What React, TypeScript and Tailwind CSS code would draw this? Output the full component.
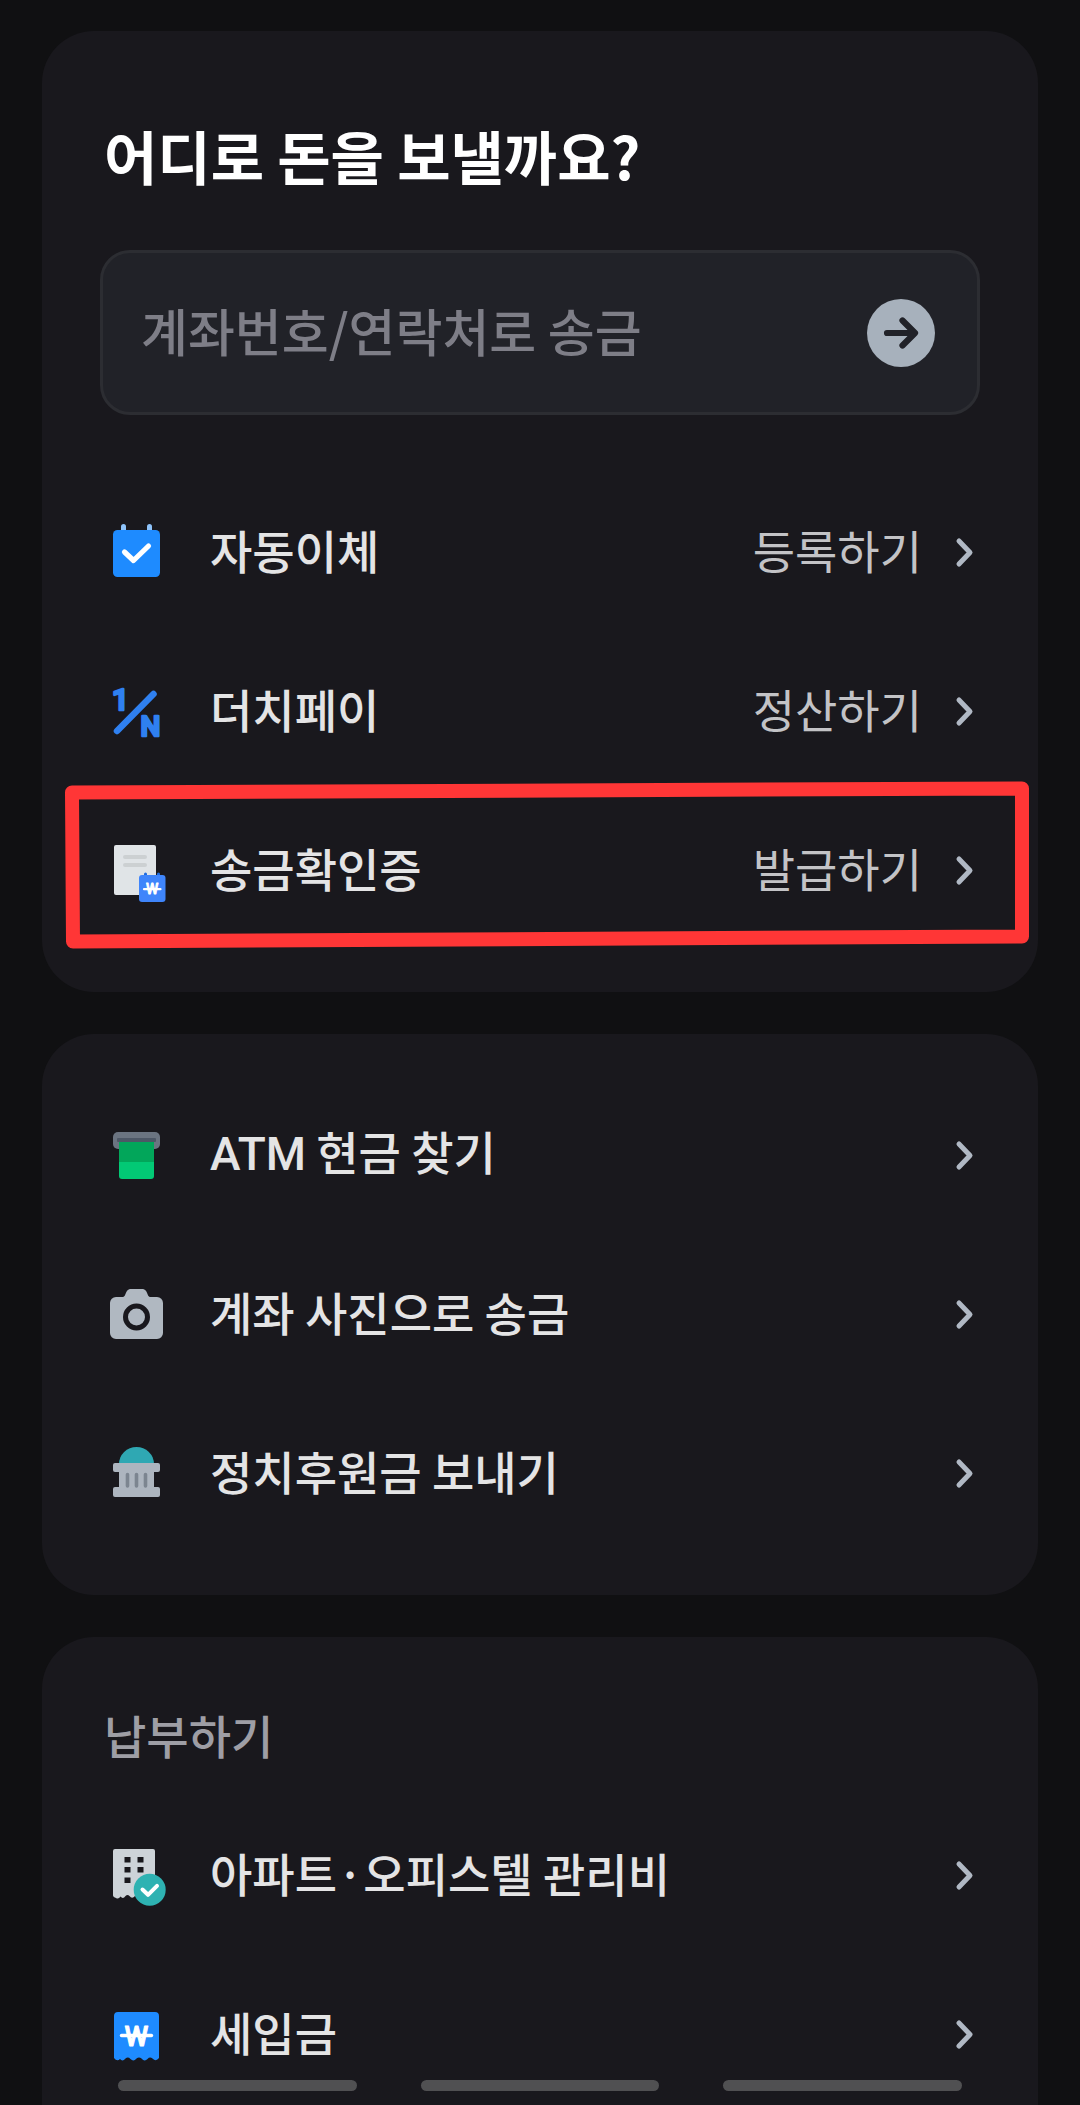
import type { ReactNode } from "react"

const iconClass = "w-[60px] h-[60px] shrink-0 overflow-visible"

function CalendarIcon() {
  return (
    <svg viewBox="0 0 60 60" className={iconClass} aria-hidden="true">
      <rect x="15" y="1" width="5" height="12" rx="2.5" fill="#8ec3fa" />
      <rect x="41" y="1" width="5" height="12" rx="2.5" fill="#8ec3fa" />
      <rect x="7" y="7" width="47" height="47" rx="4.5" fill="#1e8bff" />
      <path d="M18.5 29 27.5 37.5 42.5 23" fill="none" stroke="#fff" strokeWidth="5.2" strokeLinecap="round" strokeLinejoin="round" />
    </svg>
  )
}

function DutchPayIcon() {
  return (
    <svg viewBox="0 0 60 60" className={iconClass} aria-hidden="true">
      <path d="M11 49 47.5 12" stroke="#2f80f0" strokeWidth="6.5" strokeLinecap="round" />
      <g fill="#2f80f0" stroke="#2f80f0" strokeWidth="2.6" strokeLinejoin="round" className="font-['Roboto'] font-medium">
        <text x="6" y="27.5" fontSize="30">1</text>
        <text x="34.5" y="54" fontSize="28">N</text>
      </g>
    </svg>
  )
}

function CertificateIcon() {
  return (
    <svg viewBox="0 0 60 60" className={iconClass} aria-hidden="true">
      <rect x="8" y="4" width="42" height="50" rx="2" fill="#e0e4e7" />
      <rect x="17" y="14" width="24" height="4" rx="2" fill="#ccd0d2" />
      <rect x="17" y="22" width="24" height="4" rx="2" fill="#ccd0d2" />
      <rect x="38" y="31.5" width="3" height="6" rx="1.5" fill="#1e6be0" />
      <rect x="51" y="31.5" width="3" height="6" rx="1.5" fill="#1e6be0" />
      <rect x="33" y="34" width="26.5" height="27" rx="3" fill="#3f85fb" />
      <path d="M38 48.2H54.5" stroke="#fff" strokeWidth="2.2" strokeLinecap="round" />
      <text x="46.2" y="53.3" fontSize="14" textAnchor="middle" fill="#fff" stroke="#fff" strokeWidth="0.8" strokeLinejoin="round" className="font-['Roboto'] font-medium">W</text>
    </svg>
  )
}

function AtmIcon() {
  return (
    <svg viewBox="0 0 60 60" className={iconClass} aria-hidden="true">
      <rect x="7" y="6" width="47" height="17" rx="5" fill="#6b7481" />
      <rect x="11" y="12" width="39" height="4" rx="1" fill="#4d5766" />
      <path d="M13 16H48V50a3 3 0 0 1-3 3H16a3 3 0 0 1-3-3Z" fill="#02c975" />
      <rect x="13" y="16" width="35" height="20" fill="#02a65a" />
    </svg>
  )
}

function CameraIcon() {
  return (
    <svg viewBox="0 0 60 60" className={iconClass} aria-hidden="true">
      <path
        d="M10 12H17C19 12 19.5 8 21 6C22 4.4 23.5 4 25 4H36C37.5 4 39 4.4 40 6C41.5 8 42 12 44 12H51A6 6 0 0 1 57 18V48A6 6 0 0 1 51 54H10A6 6 0 0 1 4 48V18A6 6 0 0 1 10 12Z"
        fill="#b0b8c1"
      />
      <circle cx="30.5" cy="32" r="11" fill="none" stroke="#19181d" strokeWidth="5" />
    </svg>
  )
}

function AssemblyIcon() {
  return (
    <svg viewBox="0 0 60 60" className={iconClass} aria-hidden="true">
      <path d="M13 20a17.5 17 0 0 1 35 0Z" fill="#2fa8b3" />
      <rect x="13" y="24" width="35" height="24" fill="#adb5bf" />
      <rect x="7" y="19" width="47" height="9" rx="2" fill="#adb5bf" />
      <rect x="7" y="43" width="47" height="10" rx="2" fill="#adb5bf" />
      <path d="M21.5 30.5V42M30.5 30.5V42M39.5 30.5V42" stroke="#7c8590" strokeWidth="3.6" strokeLinecap="round" />
    </svg>
  )
}

function ApartmentIcon() {
  return (
    <svg viewBox="0 0 60 60" className={iconClass} aria-hidden="true">
      <path
        d="M9 3H47a2 2 0 0 1 2 2V50Q46 53.500 43 50 41 48 39 50 36 53.500 33 50 31 48 29 50 26 53.500 23.500 50 21.500 48 19.500 50 17 53.500 14.500 50.500 12.500 53.500 10 52 7 51 7 49.500V5a2 2 0 0 1 2-2Z"
        fill="#cdd3d8"
      />
      <g fill="#19181d">
        <rect x="18.5" y="11" width="6" height="5.5" />
        <rect x="31.5" y="11" width="6" height="5.5" />
        <rect x="18.5" y="21" width="6" height="5.5" />
        <rect x="31.5" y="21" width="6" height="5.5" />
        <rect x="18.5" y="31.5" width="6" height="5.5" />
      </g>
      <circle cx="43.7" cy="43.7" r="16" fill="#2eb2b2" />
      <path d="M36.5 43.5 42 48.8 51 39.8" fill="none" stroke="#fff" strokeWidth="4" strokeLinecap="round" strokeLinejoin="round" />
    </svg>
  )
}

function TaxIcon() {
  return (
    <svg viewBox="0 0 60 60" className={iconClass} aria-hidden="true">
      <path
        d="M12 7H49a4 4 0 0 1 4 4V53Q50 57 46.5 53.5 43.8 51.5 41.5 54 38.5 57 35.5 53.5 33 51.5 30.5 53.5 27.5 57 24.5 54 22 51.5 19.5 53.5 16.5 57 14 54 11 57 8 53V11a4 4 0 0 1 4-4Z"
        fill="#1e8bff"
      />
      <path d="M15.5 30.5H45.5" stroke="#fff" strokeWidth="3.4" strokeLinecap="round" />
      <text x="30.5" y="40.5" fontSize="27" textAnchor="middle" fill="#fff" stroke="#fff" strokeWidth="1" strokeLinejoin="round" className="font-['Roboto'] font-medium">W</text>
    </svg>
  )
}

function Chevron() {
  return (
    <svg viewBox="0 0 20 32" className="w-5 h-8 shrink-0" aria-hidden="true">
      <path d="M5 4 16 15.5 5 27" fill="none" stroke="#b0b8c4" strokeWidth="5" strokeLinecap="round" strokeLinejoin="round" />
    </svg>
  )
}

// Hand-drawn marker frame around a menu row
function Marker() {
  return (
    <svg
      viewBox="0 0 976 159"
      preserveAspectRatio="none"
      className="absolute -left-12 top-0 w-[calc(100%+96px)] h-full overflow-visible pointer-events-none"
      aria-hidden="true"
    >
      <path d="M20 1.5 970-2.5 970 145.5 21 150.5Z" fill="none" stroke="#ff3636" strokeWidth="14" strokeLinejoin="round" />
    </svg>
  )
}

interface Item {
  id: string
  icon: ReactNode
  label: ReactNode
  action?: string
  marked?: boolean
}

const transferItems: Item[] = [
  { id: "auto", icon: <CalendarIcon />, label: "자동이체", action: "등록하기" },
  { id: "dutch", icon: <DutchPayIcon />, label: "더치페이", action: "정산하기" },
  { id: "certificate", icon: <CertificateIcon />, label: "송금확인증", action: "발급하기", marked: true },
]

const serviceItems: Item[] = [
  { id: "atm", icon: <AtmIcon />, label: <><span className="font-['Roboto']">ATM</span> 현금 찾기</> },
  { id: "camera", icon: <CameraIcon />, label: "계좌 사진으로 송금" },
  { id: "donation", icon: <AssemblyIcon />, label: "정치후원금 보내기" },
]

const paymentItems: Item[] = [
  { id: "apartment", icon: <ApartmentIcon />, label: "아파트·오피스텔 관리비" },
  { id: "tax", icon: <TaxIcon />, label: "세입금" },
]

function MenuList({ items }: { items: Item[] }) {
  return (
    <ul>
      {items.map((item) => (
        <li key={item.id} className="relative">
          <a href="#" className="flex items-center h-[159px] px-1.5 text-[46px] leading-[60px]">
            {item.icon}
            <span className="ml-11 pb-2 font-medium text-[#e4e4e5]">{item.label}</span>
            {item.action && <span className="ml-auto mr-8 pb-2 text-[#c3c3c6]">{item.action}</span>}
            <span className={item.action ? "" : "ml-auto"}>
              <Chevron />
            </span>
          </a>
          {item.marked && <Marker />}
        </li>
      ))}
    </ul>
  )
}

const cardClass = "bg-[#19181d] rounded-[52px] px-[58px] pb-[42px] shrink-0"

export default function App() {
  return (
    <div className="relative h-screen overflow-hidden bg-[#101012] font-['Noto_Sans_CJK_KR','Noto_Sans',sans-serif]">
      <main className="flex flex-col gap-[42px] px-[42px] pt-[31px]">
        <section className={cardClass}>
          <h1 className="px-1 pt-[84px] text-[58px] leading-[80px] font-bold text-white">어디로 돈을 보낼까요?</h1>
          <form
            className="mt-[55px] mb-[58px] flex items-center h-[165px] pl-[38px] pr-[42px] rounded-[30px] border-[3px] border-[#2c2d32] bg-[#212228]"
            onSubmit={(e) => e.preventDefault()}
          >
            <input
              type="text"
              aria-label="계좌번호/연락처로 송금"
              placeholder="계좌번호/연락처로 송금"
              className="flex-1 min-w-0 h-20 pb-1.5 bg-transparent text-[51px] font-medium text-white placeholder:text-[#7e7e87] outline-none"
            />
            <button type="submit" aria-label="송금" className="shrink-0 rounded-full">
              <svg viewBox="0 0 68 68" className="w-[68px] h-[68px]" aria-hidden="true">
                <circle cx="34" cy="34" r="34" fill="#a7b1bc" />
                <path d="M20 34H47M35.5 21.5 48 34 35.5 46.5" fill="none" stroke="#212228" strokeWidth="6.2" strokeLinecap="round" strokeLinejoin="round" />
              </svg>
            </button>
          </form>
          <MenuList items={transferItems} />
        </section>

        <section className={`${cardClass} pt-[42px]`}>
          <MenuList items={serviceItems} />
        </section>

        <section className={cardClass}>
          <h2 className="px-1 pt-[67px] pb-8 text-[46px] leading-[60px] font-medium text-[#9e9ea5]">납부하기</h2>
          <MenuList items={paymentItems} />
        </section>
      </main>

      <div className="absolute inset-x-0 bottom-3.5 flex gap-16 px-[118px]" aria-hidden="true">
        <span className="flex-1 h-[11px] rounded-full bg-[#505052]" />
        <span className="flex-1 h-[11px] rounded-full bg-[#505052]" />
        <span className="flex-1 h-[11px] rounded-full bg-[#505052]" />
      </div>
    </div>
  )
}
